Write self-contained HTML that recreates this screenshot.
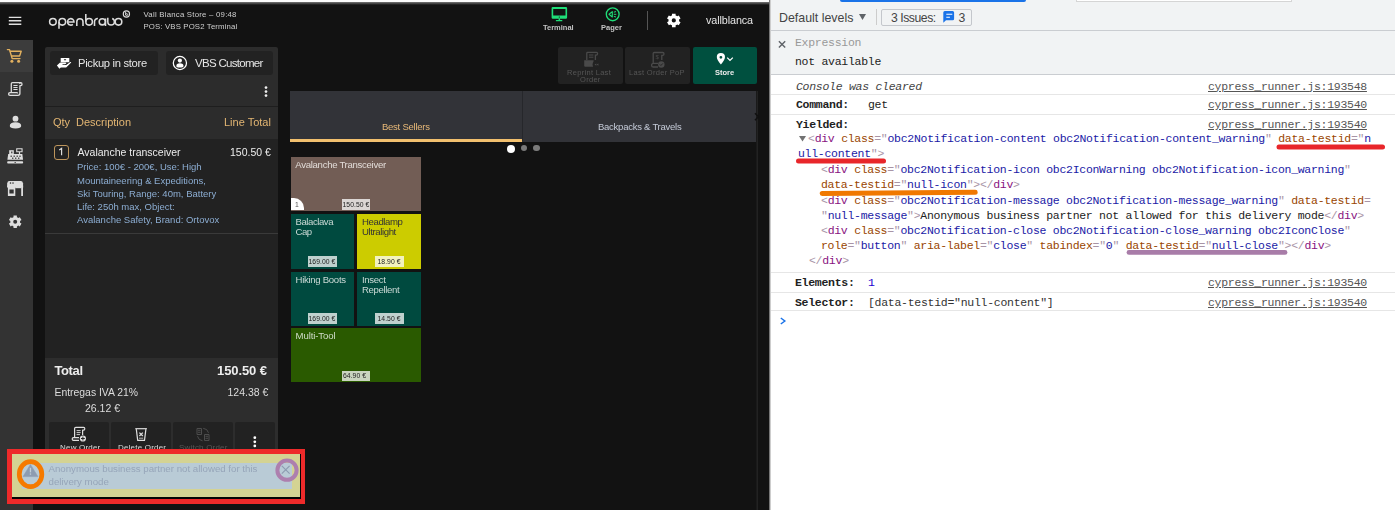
<!DOCTYPE html>
<html><head><meta charset="utf-8">
<style>
*{margin:0;padding:0;box-sizing:border-box}
html,body{width:1395px;height:510px;overflow:hidden;background:#121212;font-family:"Liberation Sans",sans-serif}
.a{position:absolute}
.t{position:absolute;white-space:pre;line-height:1}
#app{will-change:transform;position:absolute;left:0;top:0;width:769px;height:510px;background:#121212;overflow:hidden}
#dev{position:absolute;left:769px;top:0;width:626px;height:510px;background:#fff;font-family:"Liberation Mono",monospace;font-size:11px;color:#222}
.m{position:absolute;white-space:pre;line-height:1;font-family:"Liberation Mono",monospace;font-size:11.5px;letter-spacing:-0.28px}
.tg{color:#a894a6}.tn{color:#881280}.an{color:#994500}.av{color:#1a1aa6}.tx{color:#222}
.lnk{color:#555;text-decoration:underline;text-underline-offset:1px}
.hl{position:absolute;height:1px;background:#e6e6e6}
</style></head><body>
<div id="app">
  <!-- top white strip -->
  <div class="a" style="left:0;top:0;width:769px;height:2px;background:#fafafa"></div>
  <div class="a" style="left:0;top:2px;width:769px;height:3px;background:linear-gradient(#777,#121212)"></div>
  <!-- sidebar -->
  <div class="a" style="left:0;top:40px;width:33px;height:470px;background:#333"></div>
  <div class="a" style="left:0;top:40px;width:33px;height:32px;background:#3c3c3c"></div>

  <!-- logo text -->
  <div class="t" style="left:143.5px;top:11px;font-size:7.8px;letter-spacing:0.23px;color:#cfcfcf">Vall Blanca Store – 09:48</div>
  <div class="t" style="left:143.5px;top:23px;font-size:7.8px;letter-spacing:0.14px;color:#cfcfcf">POS: VBS POS2 Terminal</div>

  <div class="t" style="left:543px;top:24px;font-size:7.5px;color:#c4c4c4;font-weight:bold">Terminal</div>
  <div class="t" style="left:601px;top:24px;font-size:7.5px;color:#c4c4c4;font-weight:bold">Pager</div>
  <div class="a" style="left:647px;top:11px;width:1px;height:19px;background:#555"></div>
  <div class="t" style="left:706px;top:15px;font-size:10.8px;letter-spacing:-0.1px;color:#e6e6e6">vallblanca</div>

  <!-- left panel -->
  <div class="a" style="left:45px;top:47px;width:233px;height:59px;background:#2c2c2c;border-radius:2px 2px 0 0"></div>
  <div class="a" style="left:45px;top:106px;width:233px;height:1px;background:#1e1e1e"></div>
  <div class="a" style="left:45px;top:107px;width:233px;height:32px;background:#2c2c2c"></div>
  <div class="a" style="left:45px;top:139px;width:233px;height:219px;background:#222"></div>
  <div class="a" style="left:45px;top:233px;width:233px;height:1px;background:#3a3a3a"></div>
  <div class="a" style="left:45px;top:358px;width:233px;height:142px;background:#2d2d2d"></div>

  <div class="a" style="left:50px;top:51px;width:108px;height:24px;background:#222;border-radius:3px"></div>
  <div class="a" style="left:166px;top:51px;width:107px;height:24px;background:#222;border-radius:3px"></div>
  <div class="t" style="left:78px;top:58px;font-size:11.2px;letter-spacing:-0.3px;color:#e6e6e6">Pickup in store</div>
  <div class="t" style="left:195px;top:58px;font-size:11.5px;letter-spacing:-0.7px;color:#e6e6e6">VBS Customer</div>

  <div class="t" style="left:53px;top:117px;font-size:11px;color:#e3b673">Qty</div>
  <div class="t" style="left:76px;top:117px;font-size:11px;color:#e3b673">Description</div>
  <div class="t" style="left:224px;top:117px;font-size:11px;color:#e3b673">Line Total</div>

  <div class="a" style="left:54px;top:145px;width:15px;height:15px;border:1.2px solid #bd955c;border-radius:3px"></div>
  
  <div class="t" style="left:77.5px;top:147px;font-size:10.5px;color:#ececec">Avalanche transceiver</div>
  <div class="t" style="left:230px;top:147px;font-size:10.5px;color:#ececec">150.50 €</div>
  <div class="a" style="left:77px;top:160.3px;font-size:9.5px;line-height:13.2px;color:#8cadd2;white-space:pre">Price: 100€ - 200€, Use: High
Mountaineering &amp; Expeditions,
Ski Touring, Range: 40m, Battery
Life: 250h max, Object:
Avalanche Safety, Brand: Ortovox</div>

  <div class="t" style="left:54.5px;top:364px;font-size:13px;letter-spacing:-0.4px;font-weight:bold;color:#eee">Total</div>
  <div class="t" style="left:217px;top:364px;font-size:13px;letter-spacing:-0.1px;font-weight:bold;color:#eee">150.50 €</div>
  <div class="t" style="left:54.5px;top:388px;font-size:10.4px;color:#ddd">Entregas IVA 21%</div>
  <div class="t" style="left:227.5px;top:387px;font-size:10.5px;color:#ddd">124.38 €</div>
  <div class="t" style="left:85px;top:402.5px;font-size:10.5px;color:#ddd">26.12 €</div>

  <div class="a" style="left:49px;top:422px;width:60px;height:40px;background:#222;border-radius:2px"></div>
  <div class="a" style="left:111px;top:422px;width:60px;height:40px;background:#222;border-radius:2px"></div>
  <div class="a" style="left:173px;top:422px;width:60px;height:40px;background:#222;border-radius:2px"></div>
  <div class="a" style="left:235px;top:422px;width:40px;height:40px;background:#222;border-radius:2px"></div>
  <div class="t" style="left:60px;top:444px;font-size:8px;letter-spacing:0.2px;color:#ddd">New Order</div>
  <div class="t" style="left:118px;top:444px;font-size:8px;letter-spacing:0.2px;color:#ddd">Delete Order</div>
  <div class="t" style="left:179px;top:444px;font-size:8px;letter-spacing:0.2px;color:#555">Switch Order</div>

  <!-- right area -->
  <div class="a" style="left:558px;top:47px;width:65px;height:37px;background:#222;border-radius:2px"></div>
  <div class="a" style="left:625px;top:47px;width:65px;height:37px;background:#222;border-radius:2px"></div>
  <div class="a" style="left:693px;top:47px;width:64px;height:37px;background:#00503f;border-radius:2px"></div>
  <div class="t" style="left:567px;top:69px;font-size:7.5px;color:#555;text-align:center;letter-spacing:0.3px">Reprint Last</div>
  <div class="t" style="left:580px;top:76px;font-size:7.5px;color:#555;letter-spacing:0.3px">Order</div>
  <div class="t" style="left:629px;top:69px;font-size:7.5px;color:#555;letter-spacing:0.3px">Last Order PoP</div>
  <div class="t" style="left:715px;top:69px;font-size:7.5px;color:#eee;font-weight:bold">Store</div>

  <div class="a" style="left:290px;top:91px;width:466px;height:50.6px;background:#323338"></div>
  <div class="a" style="left:522px;top:91px;width:1px;height:50px;background:#26272b"></div>
  <div class="a" style="left:290px;top:138.6px;width:232px;height:3px;background:#f2c06e"></div>
  <div class="a" style="left:756px;top:91px;width:1px;height:419px;background:#1a1a1a"></div><div class="a" style="left:757px;top:91px;width:1px;height:419px;background:#222"></div>
  <div class="t" style="left:382px;top:122px;font-size:9.5px;letter-spacing:-0.25px;color:#e8b978">Best Sellers</div>
  <div class="t" style="left:598px;top:122px;font-size:9.5px;letter-spacing:-0.25px;color:#c5cbd8">Backpacks &amp; Travels</div>
  <div class="a" style="left:507px;top:144.6px;width:8px;height:8px;border-radius:50%;background:#fff"></div>
  <div class="a" style="left:520.8px;top:145.1px;width:6.2px;height:6.2px;border-radius:50%;background:#7a7a7a"></div>
  <div class="a" style="left:533.4px;top:145.1px;width:6.2px;height:6.2px;border-radius:50%;background:#7a7a7a"></div>

  <!-- tiles -->
  <div class="a" style="left:291px;top:157px;width:130px;height:54px;background:#725d55"></div>
  <div class="a" style="left:291px;top:214px;width:63px;height:55px;background:#004a3f"></div>
  <div class="a" style="left:357px;top:214px;width:64px;height:55px;background:#cccc00"></div>
  <div class="a" style="left:291px;top:272px;width:63px;height:54px;background:#004a3f"></div>
  <div class="a" style="left:357px;top:272px;width:64px;height:54px;background:#004a3f"></div>
  <div class="a" style="left:291px;top:328px;width:130px;height:54px;background:#2a5a00"></div>


  <div class="t" style="left:295.3px;top:159.5px;font-size:9.6px;letter-spacing:-0.3px;color:#e2dcd8">Avalanche Transceiver</div>
  <div class="a" style="left:291px;top:198px;width:13px;height:12px;background:#fff;border-radius:0 10px 0 0"></div>
  <div class="t" style="left:295px;top:201.5px;font-size:6.8px;color:#555">1</div>
  <div class="a" style="left:342px;top:199px;width:28px;height:11px;background:rgba(255,255,255,.75)"></div>
  <div class="t" style="left:342.5px;top:201.5px;font-size:6.8px;letter-spacing:0.05px;color:#222">150.50 €</div>

  <div class="a" style="left:295.5px;top:217px;font-size:9.6px;letter-spacing:-0.45px;line-height:10px;color:#c9d9d5;white-space:pre">Balaclava
Cap</div>
  <div class="a" style="left:308px;top:256px;width:29px;height:11px;background:rgba(255,255,255,.75)"></div>
  <div class="t" style="left:308.5px;top:258.5px;font-size:6.8px;letter-spacing:0.05px;color:#222">169.00 €</div>

  <div class="a" style="left:362px;top:217px;font-size:9.6px;letter-spacing:-0.4px;line-height:10px;color:#333;white-space:pre">Headlamp
Ultralight</div>
  <div class="a" style="left:375px;top:256px;width:29px;height:11px;background:rgba(255,255,255,.75)"></div>
  <div class="t" style="left:377.5px;top:258.5px;font-size:6.8px;letter-spacing:0.05px;color:#222">18.90 €</div>

  <div class="a" style="left:295.5px;top:275px;font-size:9.6px;letter-spacing:-0.3px;line-height:10px;color:#c9d9d5;white-space:pre">Hiking Boots</div>
  <div class="a" style="left:308px;top:313px;width:29px;height:11px;background:rgba(255,255,255,.75)"></div>
  <div class="t" style="left:308.5px;top:315.5px;font-size:6.8px;letter-spacing:0.05px;color:#222">169.00 €</div>

  <div class="a" style="left:362px;top:275px;font-size:9.6px;letter-spacing:-0.35px;line-height:10px;color:#c9d9d5;white-space:pre">Insect
Repellent</div>
  <div class="a" style="left:375px;top:313px;width:29px;height:11px;background:rgba(255,255,255,.75)"></div>
  <div class="t" style="left:377.5px;top:315.5px;font-size:6.8px;letter-spacing:0.05px;color:#222">14.50 €</div>

  <div class="a" style="left:295.5px;top:330.5px;font-size:9.6px;letter-spacing:-0.1px;line-height:10px;color:#d0dcc8;white-space:pre">Multi-Tool</div>
  <div class="a" style="left:342px;top:371px;width:28px;height:10px;background:rgba(255,255,255,.75)"></div>
  <div class="t" style="left:343px;top:373px;font-size:6.8px;letter-spacing:0.05px;color:#222">64.90 €</div>
  <!-- notification -->
  <div class="a" style="left:7px;top:449px;width:298px;height:55px;background:#ee2a2a"></div>
  <div class="a" style="left:12px;top:454px;width:288.6px;height:44.8px;background:#050505"></div>
  <div class="a" style="left:12px;top:454px;width:288px;height:43px;background:#d4d393"></div>
  <div class="a" style="left:22px;top:462.6px;width:270px;height:26.2px;background:#b9cbd6"></div>
  <div class="a" style="left:48.5px;top:463.3px;font-size:9.7px;line-height:12.8px;color:#96a5b9;white-space:pre">Anonymous business partner not allowed for this
delivery mode</div>
</div>

<div id="dev">
  <div class="a" style="left:0;top:0;width:1px;height:510px;background:#777"></div><div class="a" style="left:1px;top:0;width:1px;height:510px;background:#cdcdcd"></div>
  <div class="a" style="left:2px;top:0;width:624px;height:75px;background:#f1f3f4"></div>
  <div class="a" style="left:71px;top:0;width:186px;height:2px;background:#1a73e8;border-radius:0 0 2px 2px"></div>
  <div class="a" style="left:307px;top:-1px;width:216px;height:3px;border:1px solid #d5d5d5;background:#fff"></div>
  <div class="a" style="left:2px;top:30px;width:624px;height:1px;background:#cacdd1"></div>
  <div class="t" style="left:10px;top:11.5px;font-size:12.4px;color:#444;font-family:'Liberation Sans',sans-serif">Default levels</div>
  <div class="a" style="left:107px;top:9px;width:1px;height:16px;background:#ccc"></div>
  <div class="a" style="left:112px;top:9px;width:91px;height:17px;border:1px solid #c4c7cc;border-radius:2px"></div>
  <div class="t" style="left:122px;top:11.5px;font-size:12.2px;letter-spacing:-0.45px;color:#444;font-family:'Liberation Sans',sans-serif">3 Issues:</div>
  <div class="t" style="left:189.5px;top:11.5px;font-size:12.2px;color:#444;font-family:'Liberation Sans',sans-serif">3</div>
  <div class="a" style="left:2px;top:74px;width:624px;height:1px;background:#cacdd1"></div>
  <div class="m" style="left:26px;top:37px;color:#999">Expression</div>
  <div class="m" style="left:26px;top:56px;color:#222">not available</div>

  <div class="hl" style="left:2px;top:94px;width:624px"></div>
  <div class="hl" style="left:2px;top:114px;width:624px"></div>
  <div class="hl" style="left:2px;top:272px;width:624px"></div>
  <div class="hl" style="left:2px;top:292px;width:624px"></div>
  <div class="hl" style="left:2px;top:310px;width:624px"></div>
  <div class="m" style="left:27px;top:80.5px;color:#444;font-style:italic">Console was cleared</div>
  <div class="m lnk" style="left:439px;top:80.5px">cypress_runner.js:193548</div>
  <div class="m" style="left:27px;top:99px;font-weight:bold;color:#222">Command:</div>
  <div class="m" style="left:99px;top:99px;color:#222">get</div>
  <div class="m lnk" style="left:439px;top:99px">cypress_runner.js:193540</div>
  <div class="m" style="left:27px;top:119px;font-weight:bold;color:#222">Yielded:</div>
  <div class="m lnk" style="left:439px;top:119px">cypress_runner.js:193540</div>
  <div class="m" style="left:39px;top:133px"><span class="tg">&lt;</span><span class="tn">div</span> <span class="an">class</span><span class="tg">="</span><span class="av">obc2Notification-content obc2Notification-content_warning</span><span class="tg">"</span> <span class="an">data-testid</span><span class="tg">="</span><span class="av">n</span></div>
  <div class="m" style="left:29px;top:148px"><span class="av">ull-content</span><span class="tg">"&gt;</span></div>
  <div class="m" style="left:52px;top:164px"><span class="tg">&lt;</span><span class="tn">div</span> <span class="an">class</span><span class="tg">="</span><span class="av">obc2Notification-icon obc2IconWarning obc2Notification-icon_warning</span><span class="tg">"</span></div>
  <div class="m" style="left:52px;top:179px"><span class="an">data-testid</span><span class="tg">="</span><span class="av">null-icon</span><span class="tg">"&gt;&lt;/</span><span class="tn">div</span><span class="tg">&gt;</span></div>
  <div class="m" style="left:52px;top:195px"><span class="tg">&lt;</span><span class="tn">div</span> <span class="an">class</span><span class="tg">="</span><span class="av">obc2Notification-message obc2Notification-message_warning</span><span class="tg">"</span> <span class="an">data-testid</span><span class="tg">=</span></div>
  <div class="m" style="left:52px;top:210px"><span class="tg">"</span><span class="av">null-message</span><span class="tg">"&gt;</span><span class="tx">Anonymous business partner not allowed for this delivery mode</span><span class="tg">&lt;/</span><span class="tn">div</span><span class="tg">&gt;</span></div>
  <div class="m" style="left:52px;top:225px"><span class="tg">&lt;</span><span class="tn">div</span> <span class="an">class</span><span class="tg">="</span><span class="av">obc2Notification-close obc2Notification-close_warning obc2IconClose</span><span class="tg">"</span></div>
  <div class="m" style="left:52px;top:240px"><span class="an">role</span><span class="tg">="</span><span class="av">button</span><span class="tg">"</span> <span class="an">aria-label</span><span class="tg">="</span><span class="av">close</span><span class="tg">"</span> <span class="an">tabindex</span><span class="tg">="</span><span class="av">0</span><span class="tg">"</span> <span class="an">data-testid</span><span class="tg">="</span><span class="av">null-close</span><span class="tg">"&gt;&lt;/</span><span class="tn">div</span><span class="tg">&gt;</span></div>
  <div class="m" style="left:40px;top:255px"><span class="tg">&lt;/</span><span class="tn">div</span><span class="tg">&gt;</span></div>
  <div class="m" style="left:26px;top:277px;font-weight:bold;color:#222">Elements:</div>
  <div class="m" style="left:99px;top:277px;color:#1c00cf">1</div>
  <div class="m lnk" style="left:439px;top:277px">cypress_runner.js:193540</div>
  <div class="m" style="left:26px;top:297px;font-weight:bold;color:#222">Selector:</div>
  <div class="m" style="left:99px;top:297px;color:#333">[data-testid="null-content"]</div>
  <div class="m lnk" style="left:439px;top:297px">cypress_runner.js:193540</div>
</div>
<svg class="a" style="left:0;top:0" width="1395" height="510" viewBox="0 0 1395 510">


  <path d="M59.2,150 L61.6,148.4 V155.2" stroke="#e0e0e0" stroke-width="1.15" fill="none"/>
  <!-- hamburger -->
  <path d="M8.8,17.4 H21.3 M8.8,20.8 H21.3 M8.8,24.2 H21.3" stroke="#e0e0e0" stroke-width="1.4"/>
  <!-- logo -->
  <g fill="none" stroke="#dcdcdc" stroke-width="1.55">
    <circle cx="52.9" cy="21.8" r="3.3"/>
    <circle cx="62.3" cy="21.8" r="3.3"/><path d="M59,21.8 V28.8"/>
    <path d="M67.6,21.9 H74 A3.25,3.25 0 1 0 72.9,24.3"/>
    <path d="M76.8,26 V21.8 A3.1,3.1 0 0 1 83,21.8 V26"/>
    <path d="M85.8,14 V21.8"/><circle cx="89.1" cy="21.8" r="3.3"/>
    <path d="M94.5,26 V21.8 A3.3,3.3 0 0 1 97.9,18.5"/>
    <circle cx="102.3" cy="21.8" r="3.1"/><path d="M105.5,18.5 V26"/>
    <path d="M107.8,17.8 V21.8 A3.3,3.3 0 0 0 114.4,21.8 A3.3,3.3 0 0 0 112.2,18.6"/>
    <circle cx="118.5" cy="21.8" r="3.3"/>
    <circle cx="126.4" cy="14" r="3.1" stroke-width="1.2"/>
    <path d="M125.6,11.9 V15.2" stroke-width="0.9"/><circle cx="126.7" cy="14.6" r="1" stroke-width="0.9"/>
  </g>
  <!-- sidebar icons -->
  <g fill="none" stroke="#e3b15f" stroke-width="1.4" stroke-linejoin="round" stroke-linecap="round">
    <path d="M7.4,49.6 H9.5 L12.2,58.6 H20"/>
    <path d="M10.4,51.2 H21.2 L19.6,56 H11.7"/>
  </g>
  <circle cx="11.9" cy="61.3" r="1.5" fill="#e3b15f"/><circle cx="18.6" cy="61.3" r="1.5" fill="#e3b15f"/>
  <g fill="none" stroke="#dedede" stroke-width="1.3" stroke-linejoin="round">
    <path d="M11.3,92.6 V83.8 Q11.3,82.6 12.5,82.6 H20.8 Q22,82.6 22,84.2 Q22,85.6 20.8,85.6 H19.9 V93.6 Q19.9,95.4 18,95.4 H10 Q8.6,95.4 8.6,94 Q8.6,92.6 10,92.6 H17 Q17.6,92.6 17.6,93.6"/>
    <path d="M19.9,84 V82.8" />
    <path d="M13.4,85.5 H17.6 M13.4,87.5 H17.6 M13.4,89.5 H17.6" stroke-width="1"/>
  </g>
  <circle cx="15.5" cy="118.7" r="2.9" fill="#dedede"/>
  <path d="M9.8,126 Q9.8,122.3 15.5,122.3 Q21.2,122.3 21.2,126 Q21.2,128.4 15.5,128.4 Q9.8,128.4 9.8,126 Z" fill="#dedede"/>
  <!-- cash register -->
  <g fill="#dedede">
    <path d="M16.2,148.3 H22.6 V152.2 H16.2 Z M17.3,149.3 V151.2 H21.5 V149.3 Z" fill-rule="evenodd"/>
    <rect x="18.9" y="152" width="1.2" height="2"/>
    <rect x="9.2" y="150.2" width="4.6" height="4.2"/>
    <path d="M8.2,154 H22.3 L23,159.8 H7.4 Z"/>
    <rect x="7.2" y="161.2" width="15.9" height="2.4" rx="0.8"/>
  </g>
  <g fill="#333"><rect x="10.5" y="155.6" width="1.4" height="1.2"/><rect x="13.5" y="155.6" width="1.4" height="1.2"/><rect x="16.5" y="155.6" width="1.4" height="1.2"/><rect x="19.3" y="155.6" width="1.4" height="1.2"/><rect x="12" y="157.6" width="1.4" height="1.2"/><rect x="15" y="157.6" width="1.4" height="1.2"/><rect x="18" y="157.6" width="1.4" height="1.2"/><rect x="11.2" y="151.5" width="1.2" height="1.8"/><rect x="14.5" y="162" width="1.4" height="0.8"/></g>
  <!-- store -->
  <g fill="#dedede">
    <path d="M9.2,181 H20.9 Q22.6,181 23,183.2 L23.2,187.4 H7 L7.2,183.2 Q7.6,181 9.2,181 Z"/>
    <path fill-rule="evenodd" d="M7.9,187 H15.3 V196 H7.9 Z M9.4,189.6 V193.4 H13.7 V189.6 Z"/>
    <rect x="21.2" y="187" width="1.8" height="9"/>
    <rect x="15.3" y="187" width="6" height="1.2"/>
  </g>
  <g fill="#3a3a3a"><rect x="9.8" y="182.3" width="1.4" height="1.4" rx="0.5"/><rect x="12.3" y="182.3" width="1.4" height="1.4" rx="0.5"/></g>
  <path fill="#dedede" fill-rule="evenodd" d="M12.75,217.56 L13.50,217.20 L13.52,215.52 L16.88,215.52 L16.90,217.20 L17.65,217.56 L18.33,218.03 L19.80,217.20 L21.48,220.12 L20.03,220.97 L20.10,221.80 L20.03,222.63 L21.48,223.48 L19.80,226.40 L18.33,225.57 L17.65,226.04 L16.90,226.40 L16.88,228.08 L13.52,228.08 L13.50,226.40 L12.75,226.04 L12.07,225.57 L10.60,226.40 L8.92,223.48 L10.37,222.63 L10.30,221.80 L10.37,220.97 L8.92,220.12 L10.60,217.20 L12.07,218.03 Z M17.20,221.80 A2.0,2.0 0 1 0 13.20,221.80 A2.0,2.0 0 1 0 17.20,221.80 Z"/>
  <!-- top panel kebab -->
  <g fill="#f0f0f0"><circle cx="266" cy="87.6" r="1.35"/><circle cx="266" cy="91.6" r="1.35"/><circle cx="266" cy="95.6" r="1.35"/></g>
  <!-- pickup icon -->
  <path d="M61.2,58 H68.8 Q69.3,58 69.3,58.5 V62.2 H60.7 V58.5 Q60.7,58 61.2,58 Z" fill="#fff"/>
  <rect x="63.8" y="59.3" width="2.4" height="0.9" rx="0.4" fill="#222"/>
  <path d="M56.9,65.4 L59.8,62.8 Q60.4,62.4 61.2,62.4 H65.4 Q66.6,62.6 66.2,63.6 Q65.9,64.2 64.8,64.3 H62.5 V64.9 H66.2 L70.3,62 Q71.3,61.6 71.2,62.6 L66.7,67 Q66.2,67.5 65.2,67.5 H60.8 L59.4,68.8 Z" fill="#fff"/>
  <!-- user circle -->
  <circle cx="179.9" cy="63" r="6.6" fill="none" stroke="#fff" stroke-width="1.25"/>
  <circle cx="179.9" cy="60.6" r="2.1" fill="#fff"/>
  <path d="M176.3,66.1 Q176.3,63.3 179.9,63.3 Q183.5,63.3 183.5,66.1 Q183.5,67.6 179.9,67.6 Q176.3,67.6 176.3,66.1 Z" fill="#fff"/>
  <!-- terminal -->
  <path fill="#1fdd78" fill-rule="evenodd" d="M552.8,6.9 H565.9 Q567.1,6.9 567.1,8.1 V17.6 Q567.1,18.8 565.9,18.8 H552.8 Q551.6,18.8 551.6,17.6 V8.1 Q551.6,6.9 552.8,6.9 Z M553.2,9.1 V15.5 H565.5 V9.1 Z"/>
  <rect x="558.6" y="18.5" width="1.5" height="2" fill="#1fdd78"/>
  <rect x="555.8" y="20" width="6.6" height="1.3" rx="0.6" fill="#1fdd78"/>
  <circle cx="559.3" cy="17.1" r="0.6" fill="#121212"/>
  <!-- pager -->
  <circle cx="612.7" cy="14.3" r="6.4" fill="none" stroke="#1fdd78" stroke-width="1.35"/>
  <path d="M609,14.3 L612.3,11.6 V17 Z" fill="none" stroke="#1fdd78" stroke-width="1.1" stroke-linejoin="round"/>
  <path d="M613.8,12.2 L616,11.6 M613.8,14.3 H616.3 M613.8,16.4 L616,17" stroke="#1fdd78" stroke-width="1"/>
  <!-- gear -->
  <path fill="#fff" fill-rule="evenodd" d="M671.15,15.81 L671.97,15.43 L671.99,13.64 L675.61,13.64 L675.63,15.43 L676.45,15.81 L677.19,16.33 L678.75,15.45 L680.56,18.59 L679.02,19.50 L679.10,20.40 L679.02,21.30 L680.56,22.21 L678.75,25.35 L677.19,24.47 L676.45,24.99 L675.63,25.37 L675.61,27.16 L671.99,27.16 L671.97,25.37 L671.15,24.99 L670.41,24.47 L668.85,25.35 L667.04,22.21 L668.58,21.30 L668.50,20.40 L668.58,19.50 L667.04,18.59 L668.85,15.45 L670.41,16.33 Z M675.90,20.40 A2.1,2.1 0 1 0 671.70,20.40 A2.1,2.1 0 1 0 675.90,20.40 Z"/>
  <!-- reprint -->
  <g fill="none" stroke="#4a4a4a" stroke-width="1.3">
    <path d="M586.8,60 V53.2 Q586.8,52.4 587.6,52.4 H596.4 Q597.6,52.4 597.6,53.8 Q597.6,55.2 596.2,55.2 H595.4 V60"/>
    <path d="M589,55 H593.4 M589,57.2 H593.4" stroke-width="1"/>
  </g>
  <path d="M584.2,60.2 H593.5 V66.8 H585.2 Q584.2,66.8 584.2,65.8 Z" fill="#4a4a4a"/>
  <circle cx="596.2" cy="64.6" r="3.6" fill="#222"/>
  <path d="M594.5,64.6 L596.3,63.4 V65.8 Z M596.6,64.6 L598.4,63.4 V65.8 Z" fill="#4a4a4a"/>
  <!-- pop -->
  <g fill="none" stroke="#4a4a4a" stroke-width="1.3">
    <path d="M653.2,63.5 V53.4 Q653.2,52.5 654.2,52.5 H662.8 Q664,52.5 664,54 Q664,55.4 662.6,55.4 H661.8 V60"/>
    <path d="M651.6,65.4 Q651.6,63.4 653.4,63.4 H658 M651.6,65.4 Q651.6,67 653.4,67 H658"/>
  </g>
  <text x="655.6" y="58.8" font-size="6" fill="#4a4a4a" font-family="Liberation Sans">$</text>
  <circle cx="661.3" cy="64.5" r="3.2" fill="#4a4a4a"/>
  <path d="M659.8,64.4 L660.9,65.5 L662.9,63.4" stroke="#222" stroke-width="0.9" fill="none"/>
  <!-- store pin -->
  <path fill="#fff" fill-rule="evenodd" d="M720.9,64.6 C718.6,61.6 716.8,59.6 716.8,57.1 A4.1,4.1 0 0 1 725,57.1 C725,59.6 723.2,61.6 720.9,64.6 Z M722.3,57.3 A1.4,1.4 0 1 0 719.5,57.3 A1.4,1.4 0 1 0 722.3,57.3 Z"/>
  <path d="M727.2,57.6 L730,60.4 L732.8,57.6" stroke="#fff" stroke-width="1.3" fill="none"/>
  <!-- chevron right in tabs -->
  <path d="M755,113.3 L758.4,116.8 L755,120.3" stroke="#111" stroke-width="1.6" fill="none"/>
  <!-- bottom icons -->
  <g fill="none" stroke="#dedede" stroke-width="1.2" stroke-linejoin="round">
    <path d="M74.6,437.6 V428.4 Q74.6,427.3 75.8,427.3 H83.6 Q84.8,427.3 84.8,428.8 Q84.8,430.2 83.6,430.2 H82.6 V435"/>
    <path d="M79,440.3 H73.5 Q72.2,440.3 72.2,439 Q72.2,437.6 73.5,437.6 H79"/>
    <path d="M76.6,430.6 H80.6 M76.6,432.6 H80.6 M76.6,434.6 H80" stroke-width="0.9"/>
  </g>
  <circle cx="82.9" cy="438.5" r="3.1" fill="#dedede"/>
  <path d="M82.9,436.6 V440.4 M81,438.5 H84.8" stroke="#222" stroke-width="1"/>
  <g fill="none" stroke="#dedede" stroke-width="1.2" stroke-linejoin="round">
    <path d="M135.3,428.7 H146.9"/>
    <path d="M136.3,429.2 L137.7,440.3 H144.5 L145.9,429.2"/>
    <path d="M139.4,432.6 L142.8,436 M142.8,432.6 L139.4,436" stroke-width="1.3"/>
    <path d="M139,438.2 H143.2" stroke-width="0.8"/>
  </g>
  <g fill="none" stroke="#4d4d4d" stroke-width="1">
    <path d="M197,428.5 H201.5 V434.5 H197 Z M198,430.3 H200.5 M198,432.3 H200.5"/>
    <path d="M204.5,434.5 H209 V440.5 H204.5 Z M205.5,436.3 H208 M205.5,438.3 H208"/>
    <path d="M203.2,428.3 A6,6 0 0 1 208.5,432.8 M202.5,440.8 A6,6 0 0 1 197.5,436.2"/>
  </g>
  <g fill="#fff"><circle cx="254.8" cy="437.7" r="1.4"/><circle cx="254.8" cy="441.8" r="1.4"/><circle cx="254.8" cy="445.9" r="1.4"/></g>

  <!-- notification icons -->
  <ellipse cx="30.55" cy="474.2" rx="11.3" ry="12.5" fill="none" stroke="#f57a00" stroke-width="4.7"/>
  <path d="M30.4,464.4 L37.9,476.6 H23.1 Z" fill="#8d9cb1" stroke="#8d9cb1" stroke-width="0.6" stroke-linejoin="round"/>
  <rect x="29.8" y="467.8" width="1.3" height="4.6" fill="#c2d0da"/>
  <rect x="29.8" y="473.4" width="1.3" height="1.3" fill="#c2d0da"/>
  <circle cx="287" cy="470.2" r="9.6" fill="none" stroke="#ad7fae" stroke-width="4"/>
  <path d="M281.8,465.8 L289.6,473.6 M289.6,465.8 L281.8,473.6" stroke="#8c9bb0" stroke-width="1.1"/>
  <!-- devtools icons -->
  <path d="M778.9,41.2 L785.2,47.5 M785.2,41.2 L778.9,47.5" stroke="#5f6368" stroke-width="1.4" fill="none"/>
  <path d="M859,14 L866,14 L862.5,20 Z" fill="#5f6368"/>
  <path d="M944.8,11 h7.8 a1.5,1.5 0 0 1 1.5,1.5 v6.3 a1.5,1.5 0 0 1 -1.5,1.5 h-6.6 l-2.7,2.4 v-10.2 a1.5,1.5 0 0 1 1.5,-1.5 z" fill="#1a73e8"/>
  <path d="M946.3,14.3 h6 M946.3,17.3 h3.6" stroke="#fff" stroke-width="1.1"/>
  <path d="M799,136 L806,136 L802.5,141.5 Z" fill="#727272"/>
  <path d="M780.8,318 L784.8,321 L780.8,324" stroke="#1a73e8" stroke-width="1.5" fill="none"/>
  <!-- annotations -->
  <path d="M798.5,161 L883.5,161" stroke="#e8262a" stroke-width="5" stroke-linecap="round"/>
  <path d="M1279,147 L1382.5,147" stroke="#e8262a" stroke-width="5" stroke-linecap="round"/>
  <path d="M822.2,193.6 L975.2,192.2" stroke="#f07800" stroke-width="5" stroke-linecap="round"/>
  <path d="M1129,252.4 L1285,252.4" stroke="#a87ca8" stroke-width="4.8" stroke-linecap="round"/>
</svg>
</body></html>
